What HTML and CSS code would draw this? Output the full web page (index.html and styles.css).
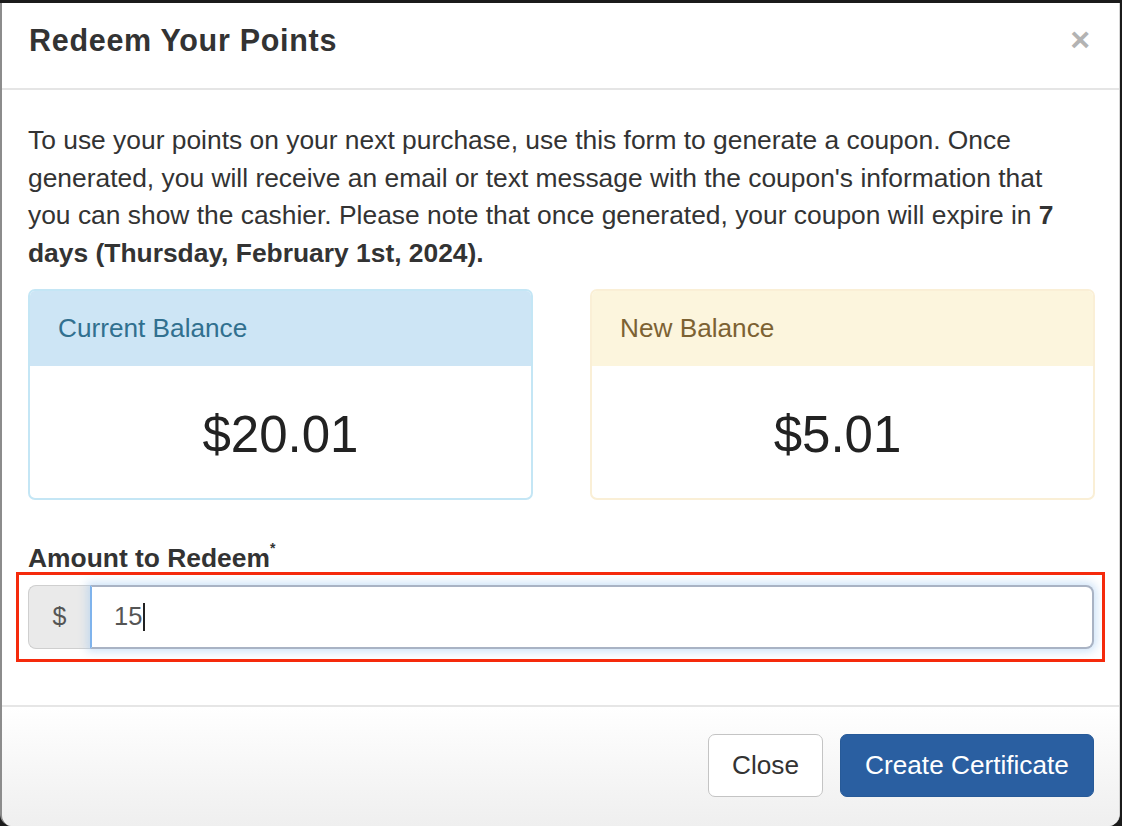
FILE: index.html
```html
<!DOCTYPE html>
<html>
<head>
<meta charset="utf-8">
<link rel="stylesheet" href="styles.css">
</head>
<body>
<div class="modal">
  <div class="modal-header">
    <h4 class="modal-title">Redeem Your Points</h4>
    <span class="close">&times;</span>
  </div>
  <div class="modal-body">
    <p class="intro">To use your points on your next purchase, use this form to generate a coupon. Once generated, you will receive an email or text message with the coupon's information that you can show the cashier. Please note that once generated, your coupon will expire in <b>7 days (Thursday, February 1st, 2024).</b></p>
    <div class="panels">
      <div class="panel panel-info">
        <div class="panel-heading">Current Balance</div>
        <div class="panel-body">$20.01</div>
      </div>
      <div class="panel panel-warning">
        <div class="panel-heading">New Balance</div>
        <div class="panel-body">$5.01</div>
      </div>
    </div>
    <label class="field-label">Amount to Redeem<sup>*</sup></label>
    <div class="group-wrap">
      <div class="input-group">
        <span class="addon">$</span>
        <div class="input"><span class="value">15</span><span class="caret"></span></div>
      </div>
      <div class="highlight"></div>
    </div>
  </div>
  <div class="modal-footer">
    <button class="btn btn-default">Close</button>
    <button class="btn btn-primary">Create Certificate</button>
  </div>
</div>
</body>
</html>
```
FILE: styles.css
```css
html, body {
  margin: 0;
  padding: 0;
  background: #1b1b1b;
  height: 826px;
  overflow: hidden;
}
body {
  font-family: "Liberation Sans", Arial, Helvetica, sans-serif;
  color: #333;
}
.modal {
  margin-top: 3px;
  width: 1117px;
  height: 823px;
  background: #fff;
  border-left: 2px solid #8c8c8c;
  border-right: 1px solid #d6d6d6;
  border-radius: 0 0 12px 12px;
  overflow: hidden;
  display: flex;
  flex-direction: column;
}
.modal-header {
  height: 87px;
  border-bottom: 2px solid #e5e5e5;
  display: flex;
  align-items: center;
  justify-content: space-between;
  padding: 0 29px 0 27px;
  box-sizing: border-box;
  flex: none;
}
.modal-title {
  margin: 0 0 11px 0;
  font-size: 30.5px;
  font-weight: bold;
  letter-spacing: 0.7px;
  color: #333;
}
.close {
  font-size: 34px;
  font-weight: bold;
  color: #b3b3b3;
  margin-bottom: 14px;
  line-height: 1;
}
.modal-body {
  padding: 32px 27px 0 26px;
  flex: 1;
}
.intro {
  margin: 0;
  font-size: 26.4px;
  line-height: 37.5px;
  max-width: 1066px;
}
.intro b { font-weight: bold; }
.panels {
  display: grid;
  grid-template-columns: 505px 505px;
  column-gap: 57px;
  margin-top: 17px;
}
.panel {
  border: 2px solid;
  border-radius: 7px;
  overflow: hidden;
  height: 211px;
  box-sizing: border-box;
  display: flex;
  flex-direction: column;
}
.panel-heading {
  height: 75px;
  display: flex;
  align-items: center;
  padding-left: 28px;
  font-size: 26.2px;
  flex: none;
  box-sizing: border-box;
}
.panel-body {
  flex: 1;
  display: flex;
  align-items: center;
  justify-content: center;
  font-size: 51px;
  color: #222;
  padding-top: 4px;
}
.panel-info { border-color: #c4e6f5; }
.panel-info .panel-heading { background: #cde5f5; color: #31708f; }
.panel-warning { border-color: #faefd6; }
.panel-warning .panel-heading { background: #fcf5dd; color: #7c6233; }
.panel-warning .panel-body { padding-right: 10px; }
.field-label {
  display: block;
  margin-top: 34px;
  font-size: 26.4px;
  font-weight: bold;
  line-height: 37px;
  color: #333;
}
.field-label sup {
  font-size: 14px;
  position: relative;
  top: -4px;
}
.group-wrap {
  position: relative;
  margin-top: 8px;
  width: 1066px;
}
.input-group {
  display: flex;
  height: 64px;
}
.addon {
  width: 62px;
  background: #eaeaea;
  border: 1px solid #cfcfcf;
  border-right: none;
  border-radius: 8px 0 0 8px;
  display: flex;
  align-items: center;
  justify-content: center;
  font-size: 25px;
  color: #555;
  box-sizing: border-box;
}
.input {
  flex: 1;
  border: 2px solid #a9b3c4;
  border-left: 2px solid #7fb3ec;
  border-radius: 0 8px 8px 0;
  box-shadow: 0 0 8px 3px rgba(150, 195, 240, 0.45);
  display: flex;
  align-items: center;
  padding-left: 22px;
  font-size: 25.5px;
  color: #555;
  background: #fff;
}
.caret {
  display: inline-block;
  width: 1.5px;
  height: 28px;
  background: #222;
  margin-left: 1px;
}
.highlight {
  position: absolute;
  left: -12px;
  right: -11px;
  top: -13px;
  bottom: -13px;
  border: 3px solid #f52a0c;
  pointer-events: none;
}
.modal-footer {
  height: 121px;
  box-sizing: border-box;
  border-top: 2px solid #e6e6e6;
  background: linear-gradient(#ffffff, #efefef);
  display: flex;
  justify-content: flex-end;
  align-items: flex-start;
  gap: 17px;
  padding: 27px 25px 0 0;
  flex: none;
}
.btn {
  font-family: "Liberation Sans", Arial, Helvetica, sans-serif;
  font-size: 26.2px;
  height: 63px;
  border-radius: 7px;
  padding: 0;
  cursor: pointer;
}
.btn-default {
  background: #fff;
  border: 1.5px solid #c4c4c4;
  color: #333;
  width: 115px;
}
.btn-primary {
  background: #2a5fa1;
  border: 1px solid #275a98;
  color: #fff;
  width: 254px;
}
```
